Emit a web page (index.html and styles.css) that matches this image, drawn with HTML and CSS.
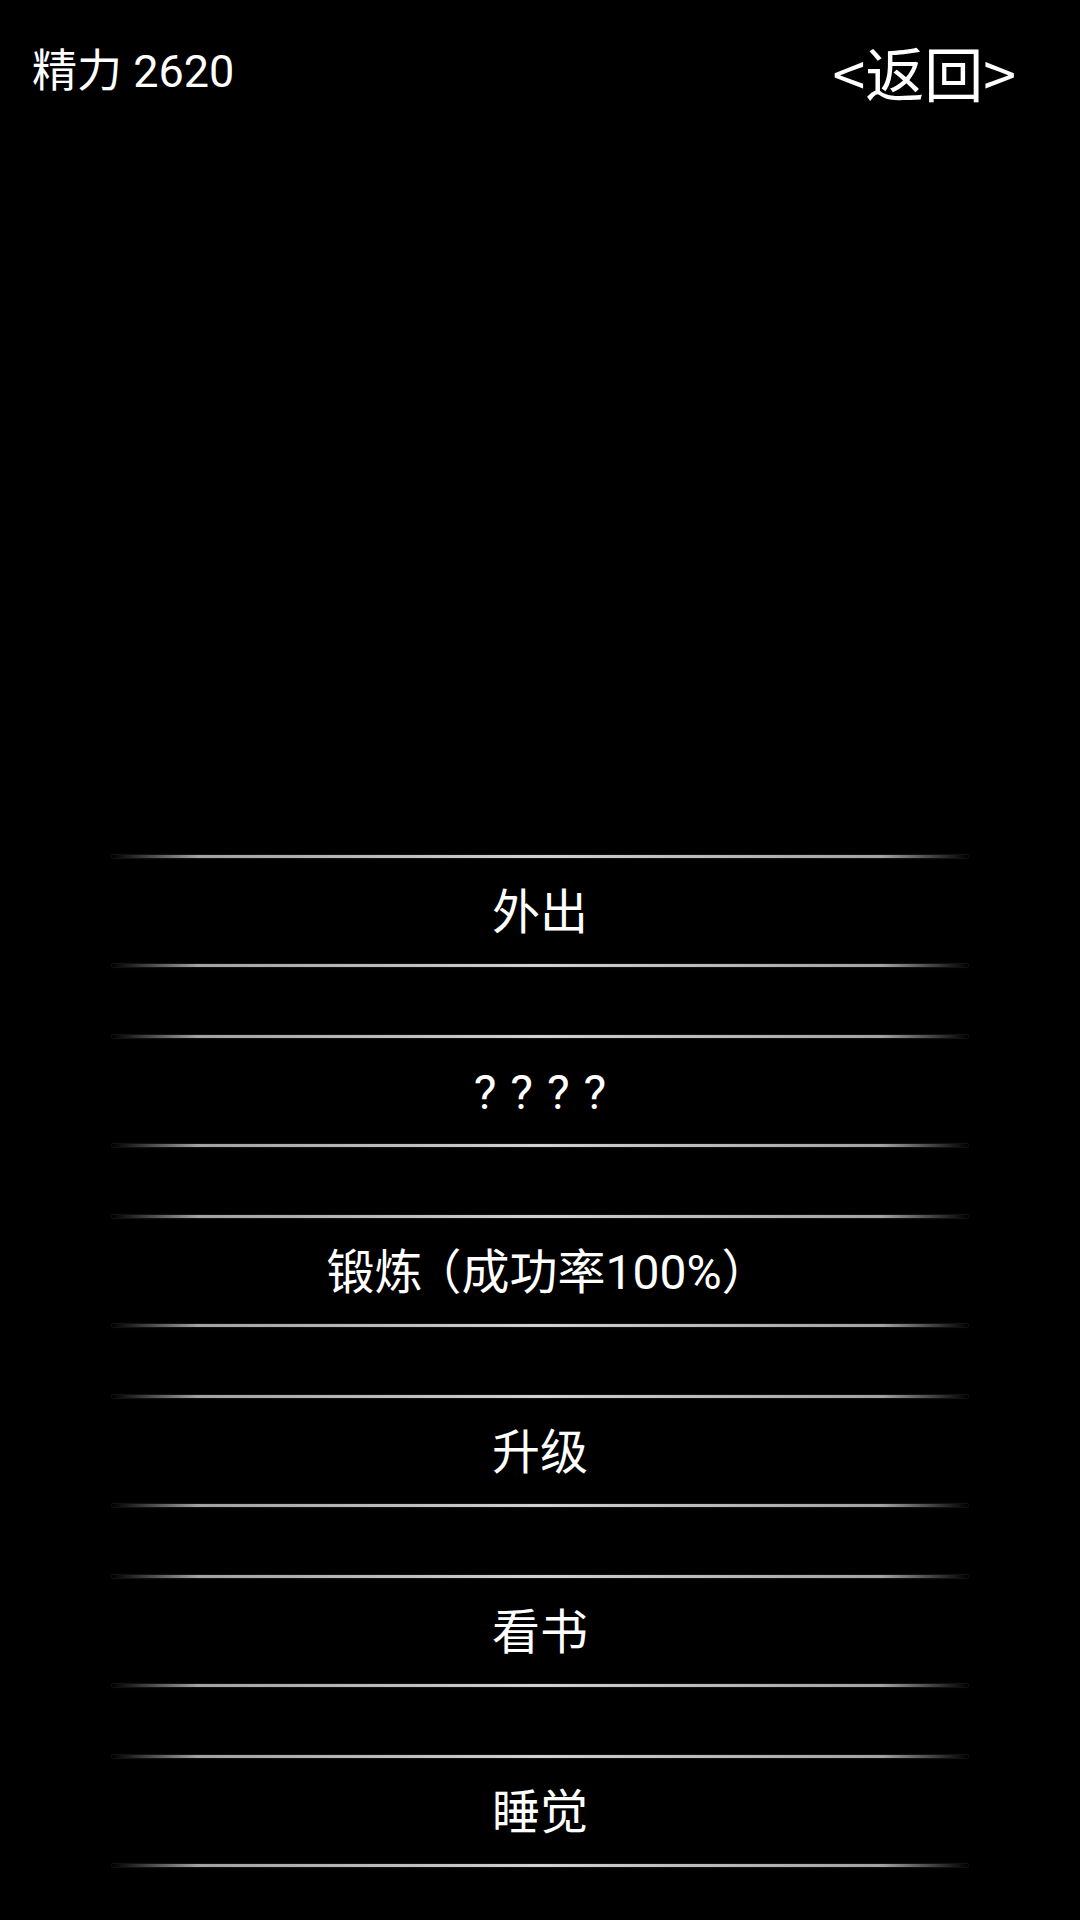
FILE: index.html
```html
<!DOCTYPE html>
<html lang="zh-CN">
<head>
<meta charset="utf-8">
<title>精力</title>
<link rel="stylesheet" href="styles.css">
</head>
<body>
<div class="screen">
  <header class="top">
    <span class="energy">精力 2620</span>
    <span class="back">&lt;返回&gt;</span>
  </header>
  <nav class="menu">
    <div class="item"><span class="rule"></span><span class="label">外出</span><span class="rule"></span></div>
    <div class="item"><span class="rule"></span><span class="label qm">? ? ? ?</span><span class="rule"></span></div>
    <div class="item"><span class="rule"></span><span class="label">锻炼<span class="po">（</span>成功率100%<span class="pc">）</span></span><span class="rule"></span></div>
    <div class="item"><span class="rule"></span><span class="label">升级</span><span class="rule"></span></div>
    <div class="item"><span class="rule"></span><span class="label">看书</span><span class="rule"></span></div>
    <div class="item"><span class="rule"></span><span class="label">睡觉</span><span class="rule"></span></div>
  </nav>
</div>
</body>
</html>
```

FILE: styles.css
```css
html, body {
  margin: 0;
  padding: 0;
  background: #000;
}

.screen {
  width: 1080px;
  height: 1920px;
  display: flex;
  flex-direction: column;
  background: #000;
  color: #fff;
  font-family: Roboto, "Noto Sans CJK SC", sans-serif;
  overflow: hidden;
}

.top {
  height: 140px;
  display: flex;
  align-items: center;
  justify-content: space-between;
  padding: 0 64px 0 32px;
}

.energy {
  font-size: 45px;
  line-height: 1;
  margin-top: 2px;
}

.back {
  font-family: "Noto Sans CJK SC", sans-serif;
  font-size: 59px;
  line-height: 1;
  margin-top: 2px;
}

.menu {
  margin-top: auto;
  padding-bottom: 53px;
  display: flex;
  flex-direction: column;
  align-items: center;
  gap: 68px;
}

.item {
  width: 856px;
  height: 112px;
  display: flex;
  flex-direction: column;
}

.rule {
  display: block;
  height: 3px;
  flex: none;
  background: linear-gradient(90deg,
    rgba(200, 200, 200, 0) 0%,
    rgba(190, 190, 190, 0.85) 10%,
    rgba(210, 210, 210, 1) 50%,
    rgba(190, 190, 190, 0.85) 90%,
    rgba(200, 200, 200, 0) 100%);
  box-shadow: 0 0 1.5px rgba(200, 200, 200, 0.45);
}

.label {
  flex: 1;
  display: flex;
  align-items: center;
  justify-content: center;
  font-size: 48px;
  line-height: 1;
  padding-top: 4px;
}

.po {
  font-feature-settings: "halt" 1;
  padding-left: 15px;
}

.pc {
  font-feature-settings: "halt" 1;
  padding-right: 8px;
}

.qm {
  word-spacing: 2px;
}
```
